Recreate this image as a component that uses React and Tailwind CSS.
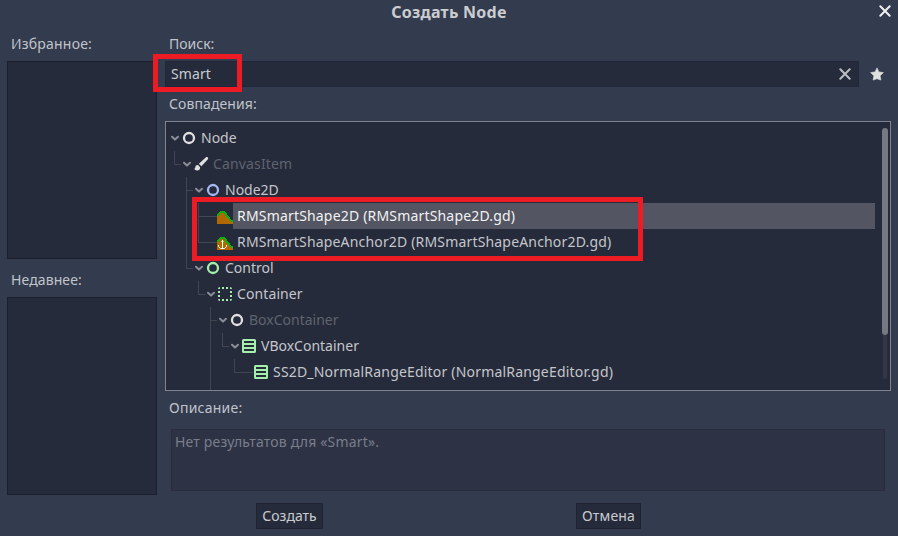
const LABEL = "text-[14px] leading-[20px] text-[#c0c4cb]";

function Cross({ className }) {
  return (
    <svg className={className} width="16" height="16" viewBox="0 0 16 16" fill="none" stroke="currentColor" strokeWidth="2">
      <path d="M3.300 3.300l9.400 9.400M12.700 3.300l-9.400 9.400" strokeLinecap="round" />
    </svg>
  );
}

function Star() {
  return (
    <svg width="16" height="16" viewBox="0 0 16 16" fill="#e0e0e0" stroke="#e0e0e0" strokeWidth="0.6" strokeLinejoin="round">
      <path d="M8 1.900 6.100 5.900l-4.500.7 3.300 3.200-.8 4.300L8 12.700l3.900 1.400-.8-4.300 3.300-3.200-4.500-.7z" />
    </svg>
  );
}

function Chevron() {
  return (
    <svg className="shrink-0" width="11" height="12" viewBox="0 0 11 12" fill="none" stroke="#8b8e98" strokeWidth="2">
      <path d="M2 4.800 5 7.600l3-2.800" strokeLinecap="round" strokeLinejoin="round" />
    </svg>
  );
}

function Ring({ color }) {
  return <circle cx="8" cy="8" r="5" fill="none" stroke={color} strokeWidth="2.3" />;
}

function Hill() {
  return (
    <g shapeRendering="crispEdges">
      <path d="M0 16V8l3-4h4l3 4 3 4 3 2v2z" fill="#b06800" />
      <path d="M0 8 3 4.500 4.500 4h2L8 5l2 3 3 3.500 1.500 1.500H16" fill="none" stroke="#11b011" strokeWidth="2" />
    </g>
  );
}

const ICONS = {
  node: <Ring color="#e0e0e0" />,
  node2d: <Ring color="#a5b7f3" />,
  control: <Ring color="#a5efac" />,
  brush: (
    <g fill="#e0e0e0">
      <path d="M14.800 1.500c-.6-.6-1.500-.5-2.100 0L5.900 7.800l2.500 2.500 6.300-6.800c.6-.6.6-1.500.1-2z" />
      <path d="M5.100 9.100c-1.500-.3-2.500.5-2.700 1.800-.1.900-.5 1.500-1.200 2.100 1.200 1.900 5 2.100 5.800-.6.200-.6.100-1.100-.1-1.500z" />
    </g>
  ),
  container: (
    <path fill="#a5efac" d="M3 1a2 2 0 0 0-2 2h2zm2 0v2h2V1zm4 0v2h2V1zm4 0v2h2a2 2 0 0 0-2-2zM1 5v2h2V5zm12 0v2h2V5zM1 9v2h2V9zm12 0v2h2V9zM1 13a2 2 0 0 0 2 2v-2zm4 0v2h2v-2zm4 0v2h2v-2zm4 0v2a2 2 0 0 0 2-2z" />
  ),
  vbox: (
    <path fill="#a5efac" fillRule="evenodd" d="M2.500 1A1.500 1.500 0 0 0 1 2.500v11A1.500 1.500 0 0 0 2.500 15h11a1.500 1.500 0 0 0 1.500-1.500v-11A1.500 1.500 0 0 0 13.500 1zM3 3h10v2H3zm0 4h10v2H3zm0 4h10v2H3z" />
  ),
  shape: <Hill />,
  anchor: (
    <>
      <Hill />
      <path d="M5.500 6v9M4.500 7.500h2M1.500 11v1.500l2 2h4l2-2V11" fill="none" stroke="#fff" strokeWidth="1" />
    </>
  ),
};

/* Guide cells: "" blank, "v" passing line, "t" branch, "e" last branch */
const ROWS = [
  { guides: [], icon: "node", text: "Node" },
  { guides: ["e"], icon: "brush", text: "CanvasItem", dim: true, tracking: "tracking-[0.15px]" },
  { guides: ["", "t"], icon: "node2d", text: "Node2D" },
  { guides: ["", "v", "t"], icon: "shape", text: "RMSmartShape2D (RMSmartShape2D.gd)", leaf: true, selected: true, tracking: "tracking-[0.18px]" },
  { guides: ["", "v", "e"], icon: "anchor", text: "RMSmartShapeAnchor2D (RMSmartShapeAnchor2D.gd)", leaf: true, tracking: "tracking-[0.17px]" },
  { guides: ["", "e"], icon: "control", text: "Control" },
  { guides: ["", "", "e"], icon: "container", text: "Container", tracking: "tracking-[0.1px]" },
  { guides: ["", "", "", "t"], icon: "node", text: "BoxContainer", dim: true },
  { guides: ["", "", "", "v", "e"], icon: "vbox", text: "VBoxContainer" },
  { guides: ["", "", "", "v", "", "e"], icon: "vbox", text: "SS2D_NormalRangeEditor (NormalRangeEditor.gd)", leaf: true, tracking: "tracking-[0.19px]" },
];

function Guide({ kind, long }) {
  return (
    <span className="flex w-3 shrink-0 self-stretch pl-1">
      {kind && <span className={`w-px shrink-0 bg-[#424653] ${kind === "e" ? "h-[14px]" : "h-full"}`} />}
      {(kind === "t" || kind === "e") && <span className={`mt-[13px] h-px bg-[#424653] ${long ? "w-[7px]" : "w-1.5"}`} />}
    </span>
  );
}

function Row({ row }) {
  const tone = row.selected ? "bg-[#535662] text-[#f2f2f3]" : row.dim ? "text-[#5f636e]" : "text-[#c4c6cb]";
  return (
    <div className="flex h-[26px] shrink-0 items-center pl-1">
      {row.guides.map((kind, i) => (
        <Guide key={i} kind={kind} long={row.leaf} />
      ))}
      {row.leaf ? <span className="mt-px h-px w-[11px] shrink-0 bg-[#424653]" /> : <Chevron />}
      <svg className="shrink-0" width="16" height="16" viewBox="0 0 16 16">
        {ICONS[row.icon]}
      </svg>
      <span className={`h-full flex-1 whitespace-nowrap pl-1 text-[14px] leading-[26px] ${row.tracking ?? ""} ${tone}`}>{row.text}</span>
    </div>
  );
}

export default function App() {
  return (
    <div className="relative flex h-[536px] w-[898px] flex-col overflow-hidden bg-[#333b4e] font-['Noto_Sans',sans-serif]">
      <header className="flex h-[34px] shrink-0 items-start">
        <span className="w-[21px]" />
        <h1 className="flex-1 text-center text-[16px] font-bold leading-[24px] tracking-[0.25px] text-[#cbcdd1]">Создать Node</h1>
        <Cross className="mr-[5px] mt-[3px] text-[#f0f0f1]" />
      </header>

      <main className="flex h-[461px] shrink-0">
        <aside className="ml-[7px] flex w-[150px] flex-col">
          <div className={`${LABEL} h-[27px] pl-1 tracking-[0.2px]`}>Избранное:</div>
          <div className="h-[198px] border border-[#1c202c] bg-[#262b3b]" />
          <div className={`${LABEL} h-[38px] pl-1 pt-[11px] tracking-[0.1px]`}>Недавнее:</div>
          <div className="h-[198px] border border-[#1c202c] bg-[#262b3b]" />
        </aside>

        <section className="ml-2 flex w-[726px] flex-col">
          <div className={`${LABEL} h-[27px] pl-1`}>Поиск:</div>
          <div className="flex h-[26px]">
            <div className="flex w-[694px] items-center justify-between border border-[#22263a] bg-[#262b3b] pl-[5px] pr-[5px]">
              <span className="text-[14px] leading-[24px] tracking-[0.1px] text-[#c9cbcf]">Smart</span>
              <Cross className="text-[#bcbec3]" />
            </div>
            <div className="ml-[10px] flex items-center">
              <Star />
            </div>
          </div>
          <div className={`${LABEL} h-[34px] pl-1 pt-[7px] tracking-[0.1px]`}>Совпадения:</div>
          <div className="flex h-[270px] overflow-hidden border border-[#7f838d] bg-[#262b3b]">
            <div className="flex w-[709px] flex-col pt-[3px]">
              {ROWS.map((row) => (
                <Row key={row.text} row={row} />
              ))}
              <div className="flex h-[5px] pl-10">
                <Guide kind="v" />
              </div>
            </div>
            <div className="ml-[7px] mt-[6px] flex w-[6px] flex-col items-center">
              <div className="h-[207px] w-[6px] rounded-[3px] bg-[#767982]" />
              <div className="h-[44px] w-1 rounded-b bg-[#343846]" />
            </div>
          </div>
          <div className={`${LABEL} h-[38px] pl-1 pt-[7px] tracking-[0.25px]`}>Описание:</div>
          <div className="ml-[6px] h-[62px] w-[714px] border border-[#282c3c] bg-[#2d3245] pl-[3px] pt-[2px] text-[14px] leading-[20px] tracking-[0.18px] text-[#7a7e89]">
            Нет результатов для «Smart».
          </div>
        </section>
      </main>

      <footer className="mt-2 flex h-[26px] pl-[256px] text-[14px] leading-[24px] text-[#c9cbcf]">
        <button className="w-[67px] border border-[#202431] bg-[#262b3b]">Создать</button>
        <button className="ml-[253px] w-[65px] border border-[#202431] bg-[#262b3b] tracking-[0.15px]">Отмена</button>
      </footer>

      <div className="absolute left-[153px] top-[54px] h-[38px] w-[89px] border-[5px] border-[#ed1c24]" />
      <div className="absolute left-[192px] top-[197px] h-[64px] w-[451px] border-[5px] border-[#ed1c24]" />
    </div>
  );
}
